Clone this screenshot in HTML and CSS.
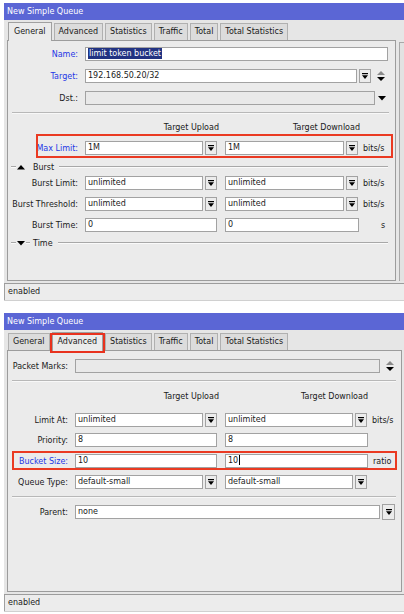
FILE: index.html
```html
<!DOCTYPE html>
<html>
<head>
<meta charset="utf-8">
<link rel="stylesheet" href="styles.css">
</head>
<body>
<div class="page">
  <!-- Window 1: General -->
  <div class="window">
    <div class="titlebar">New Simple Queue</div>
    <div class="tabs">
      <div class="tab active">General</div>
      <div class="tab">Advanced</div>
      <div class="tab">Statistics</div>
      <div class="tab">Traffic</div>
      <div class="tab">Total</div>
      <div class="tab">Total Statistics</div>
    </div>
    <div class="body">
      <div class="panel gen">
        <div class="row mt6">
          <span class="lbl blue">Name:</span>
          <div class="in w-name"><span class="sel">limit token bucket</span></div>
        </div>
        <div class="row mt8">
          <span class="lbl blue">Target:</span>
          <div class="in w-target">192.168.50.20/32</div>
          <span class="dd"><svg width="6" height="6" viewBox="0 0 6 6"><rect x="0" y="0" width="6" height="1.2" fill="#000"/><polygon points="0,2.2 6,2.2 3,6" fill="#000"/></svg></span>
          <span class="updown"><svg width="8" height="10" viewBox="0 0 8 10"><polygon points="0,4 8,4 4,0" fill="#8a8a8a"/><polygon points="0,6 8,6 4,10" fill="#000"/></svg></span>
        </div>
        <div class="row mt8">
          <span class="lbl">Dst.:</span>
          <div class="in dis w-dst"></div>
          <span class="arrow"><svg width="8" height="5" viewBox="0 0 8 5"><polygon points="0,0 8,0 4,4.5" fill="#000"/></svg></span>
        </div>
        <div class="sep mt7"></div>
        <div class="hdr mt8">
          <span class="hc1">Target Upload</span>
          <span class="hc2">Target Download</span>
        </div>
        <div class="row mt7 hl hl-max">
          <span class="lbl blue">Max Limit:</span>
          <div class="pair"><div class="in in1">1M</div><span class="dd"><svg width="6" height="6" viewBox="0 0 6 6"><rect x="0" y="0" width="6" height="1.2" fill="#000"/><polygon points="0,2.2 6,2.2 3,6" fill="#000"/></svg></span></div>
          <div class="pair"><div class="in in2">1M</div><span class="dd"><svg width="6" height="6" viewBox="0 0 6 6"><rect x="0" y="0" width="6" height="1.2" fill="#000"/><polygon points="0,2.2 6,2.2 3,6" fill="#000"/></svg></span></div>
          <span class="unit">bits/s</span>
        </div>
        <div class="sect mt7">
          <span class="ln-s"></span>
          <svg class="tri" width="8" height="5" viewBox="0 0 8 5"><polygon points="0,4.5 8,4.5 4,0" fill="#000"/></svg>
          <span class="stext">Burst</span>
          <span class="ln"></span>
        </div>
        <div class="row mt4">
          <span class="lbl">Burst Limit:</span>
          <div class="pair"><div class="in in1">unlimited</div><span class="dd"><svg width="6" height="6" viewBox="0 0 6 6"><rect x="0" y="0" width="6" height="1.2" fill="#000"/><polygon points="0,2.2 6,2.2 3,6" fill="#000"/></svg></span></div>
          <div class="pair"><div class="in in2">unlimited</div><span class="dd"><svg width="6" height="6" viewBox="0 0 6 6"><rect x="0" y="0" width="6" height="1.2" fill="#000"/><polygon points="0,2.2 6,2.2 3,6" fill="#000"/></svg></span></div>
          <span class="unit">bits/s</span>
        </div>
        <div class="row mt7">
          <span class="lbl">Burst Threshold:</span>
          <div class="pair"><div class="in in1">unlimited</div><span class="dd"><svg width="6" height="6" viewBox="0 0 6 6"><rect x="0" y="0" width="6" height="1.2" fill="#000"/><polygon points="0,2.2 6,2.2 3,6" fill="#000"/></svg></span></div>
          <div class="pair"><div class="in in2">unlimited</div><span class="dd"><svg width="6" height="6" viewBox="0 0 6 6"><rect x="0" y="0" width="6" height="1.2" fill="#000"/><polygon points="0,2.2 6,2.2 3,6" fill="#000"/></svg></span></div>
          <span class="unit">bits/s</span>
        </div>
        <div class="row mt7">
          <span class="lbl">Burst Time:</span>
          <div class="in full1">0</div>
          <div class="in full2 w-bt2">0</div>
          <span class="unit unit-s">s</span>
        </div>
        <div class="sect mt6">
          <span class="ln-s"></span>
          <svg class="tri" width="8" height="5" viewBox="0 0 8 5"><polygon points="0,0 8,0 4,4.5" fill="#000"/></svg>
          <span class="ln-s2"></span>
          <span class="stext">Time</span>
          <span class="ln"></span>
        </div>
      </div>
      <div class="side"></div>
    </div>
    <div class="status"><div class="cell">enabled</div></div>
  </div>

  <!-- Window 2: Advanced -->
  <div class="window">
    <div class="titlebar">New Simple Queue</div>
    <div class="tabs">
      <div class="tab">General</div>
      <div class="tab active boxed">Advanced</div>
      <div class="tab">Statistics</div>
      <div class="tab">Traffic</div>
      <div class="tab">Total</div>
      <div class="tab">Total Statistics</div>
    </div>
    <div class="body">
      <div class="panel adv">
        <div class="row mt8">
          <span class="lbl">Packet Marks:</span>
          <div class="in dis w-pm"></div>
          <span class="updown ud2"><svg width="8" height="10" viewBox="0 0 8 10"><polygon points="0,4 8,4 4,0" fill="#8a8a8a"/><polygon points="0,6 8,6 4,10" fill="#000"/></svg></span>
        </div>
        <div class="sep sep2 mt7"></div>
        <div class="hdr mt9">
          <span class="hc1">Target Upload</span>
          <span class="hc2">Target Download</span>
        </div>
        <div class="row mt10">
          <span class="lbl">Limit At:</span>
          <div class="pair"><div class="in in1">unlimited</div><span class="dd"><svg width="6" height="6" viewBox="0 0 6 6"><rect x="0" y="0" width="6" height="1.2" fill="#000"/><polygon points="0,2.2 6,2.2 3,6" fill="#000"/></svg></span></div>
          <div class="pair"><div class="in in2">unlimited</div><span class="dd"><svg width="6" height="6" viewBox="0 0 6 6"><rect x="0" y="0" width="6" height="1.2" fill="#000"/><polygon points="0,2.2 6,2.2 3,6" fill="#000"/></svg></span></div>
          <span class="unit">bits/s</span>
        </div>
        <div class="row mt6">
          <span class="lbl">Priority:</span>
          <div class="in full1">8</div>
          <div class="in full2">8</div>
        </div>
        <div class="row mt7 hl hl-bucket">
          <span class="lbl blue">Bucket Size:</span>
          <div class="in full1">10</div>
          <div class="in full2">10<span class="caret"></span></div>
          <span class="unit">ratio</span>
        </div>
        <div class="row mt7">
          <span class="lbl">Queue Type:</span>
          <div class="pair"><div class="in in1">default-small</div><span class="dd"><svg width="6" height="6" viewBox="0 0 6 6"><rect x="0" y="0" width="6" height="1.2" fill="#000"/><polygon points="0,2.2 6,2.2 3,6" fill="#000"/></svg></span></div>
          <div class="pair"><div class="in in2">default-small</div><span class="dd"><svg width="6" height="6" viewBox="0 0 6 6"><rect x="0" y="0" width="6" height="1.2" fill="#000"/><polygon points="0,2.2 6,2.2 3,6" fill="#000"/></svg></span></div>
        </div>
        <div class="sep sep2 mt7"></div>
        <div class="row mt7">
          <span class="lbl">Parent:</span>
          <div class="in w-pm">none</div>
          <span class="dd dd-big"><svg width="6" height="6" viewBox="0 0 6 6"><rect x="0" y="0" width="6" height="1.2" fill="#000"/><polygon points="0,2.2 6,2.2 3,6" fill="#000"/></svg></span>
        </div>
      </div>
    </div>
    <div class="status"><div class="cell">enabled</div></div>
  </div>
</div>
</body>
</html>
```

FILE: styles.css
```css
* { box-sizing: border-box; }

html, body {
  margin: 0;
  padding: 0;
  background: #ffffff;
}

body {
  font-family: "DejaVu Sans", Verdana, sans-serif;
  font-size: 8px;
  color: #1a1a1a;
  width: 404px;
  height: 614px;
  overflow: hidden;
}

.page {
  padding-top: 3px;
  display: flex;
  flex-direction: column;
  gap: 12px;
}

.window {
  margin-left: 4px;
  width: 400px;
  background: #e6e6e6;
  display: flex;
  flex-direction: column;
}

.titlebar {
  height: 17px;
  line-height: 17px;
  background: #5b66d5;
  color: #fff;
  padding-left: 3px;
  white-space: nowrap;
}

.tabs {
  height: 20px;
  display: flex;
  align-items: flex-end;
  gap: 2px;
  padding-left: 4px;
}

.tab {
  height: 17px;
  line-height: 16px;
  padding: 0 4px;
  background: #dcdcdc;
  border: 1px solid #b0b0b0;
  border-bottom: none;
  white-space: nowrap;
  color: #1a1a1a;
}

.tab.active {
  height: 19px;
  line-height: 17px;
  padding: 0 5px;
  background: #ebebeb;
  margin-bottom: -1px;
  position: relative;
  z-index: 2;
  border-color: #a0a0a0;
}

.tab.boxed::after {
  content: "";
  position: absolute;
  left: -3px;
  right: -3px;
  top: 0px;
  bottom: -2px;
  border: 2px solid #e8321e;
}

.body {
  display: flex;
  gap: 3px;
}

.panel {
  margin-left: 3px;
  width: 389px;
  height: 241px;
  border: 1px solid #9c9c9c;
  background: #ebebeb;
  display: flex;
  flex-direction: column;
}

.panel.adv {
  width: 395px;
  height: 242px;
}

.side {
  flex: 1;
  margin-top: 2px;
  border-left: 1px solid #a8a8a8;
  border-top: 1px solid #a8a8a8;
  background: #e2e2e2;
}

.gen {
  --lbl: 70px;
  --in1: 118px;
  --in2: 119px;
}

.adv {
  --lbl: 60px;
  --in1: 128px;
  --in2: 128px;
}

.row {
  display: flex;
  align-items: center;
  height: 14px;
  flex: none;
  position: relative;
}

.lbl {
  width: var(--lbl);
  margin-right: 7px;
  text-align: right;
  white-space: nowrap;
  flex: none;
}

.lbl.blue { color: #1e37e6; }

.in {
  height: 14px;
  line-height: 12px;
  border: 1px solid #a2a2a2;
  background: #fff;
  padding-left: 2px;
  white-space: nowrap;
  overflow: hidden;
  flex: none;
}

.in.dis { background: #e9e9e9; }

.sel {
  background: #223382;
  color: #fff;
  padding: 0 1px;
  display: inline-block;
  line-height: 11px;
}

.caret {
  display: inline-block;
  width: 1px;
  height: 10px;
  background: #000;
  vertical-align: -2px;
  margin-left: 1px;
}

.w-name { width: 303px; }
.w-target { width: 272px; }
.w-dst { width: 290px; }
.w-pm { width: 305px; }

.pair {
  display: flex;
  gap: 2px;
  flex: none;
}
.pair + .pair { margin-left: 8px; }

.in1 { width: var(--in1); }
.in2 { width: var(--in2); }

.full1 { width: calc(var(--in1) + 14px); }
.full2 { width: calc(var(--in2) + 15px); margin-left: 8px; }
.w-bt2 { width: 134px; }

.dd {
  width: 12px;
  height: 14px;
  border: 1px solid #a2a2a2;
  background: #ececec;
  display: flex;
  align-items: center;
  justify-content: center;
  flex: none;
  margin-left: 2px;
}
.pair .dd { margin-left: 0; }

.dd-big {
  width: 13px;
  height: 16px;
}

.updown {
  display: flex;
  margin-left: 6px;
  flex: none;
}
.ud2 { margin-left: 6px; }

.arrow {
  display: flex;
  margin-left: 3px;
  flex: none;
}

.unit {
  margin-left: 5px;
  white-space: nowrap;
}
.unit-s { margin-left: 22px; }

.sep {
  height: 2px;
  border-top: 1px solid #b8b8b8;
  border-bottom: 1px solid #f8f8f8;
  margin-left: 4px;
  margin-right: 6px;
  flex: none;
}
.sep2 { margin-right: 5px; }

.hdr {
  display: flex;
  height: 12px;
  line-height: 12px;
  flex: none;
  padding-left: calc(var(--lbl) + 7px);
  white-space: nowrap;
}
.hc1 { width: calc(var(--in1) + 16px); text-align: right; }
.hc2 { width: calc(var(--in2) + 16px); margin-left: 6px; text-align: right; }
.adv .hc2 { width: calc(var(--in2) + 15px); }

.sect {
  display: flex;
  align-items: center;
  height: 10px;
  flex: none;
  padding-left: 3px;
  padding-right: 7px;
}
.ln-s {
  width: 5px;
  height: 2px;
  border-top: 1px solid #a8a8a8;
  border-bottom: 1px solid #fafafa;
}
.ln-s2 {
  width: 4px;
  height: 2px;
  border-top: 1px solid #a8a8a8;
  border-bottom: 1px solid #fafafa;
}
.tri { margin: 0 1px; flex: none; }
.stext { margin: 0 5px 0 7px; }
.ln-s2 + .stext { margin-left: 3px; }
.ln {
  flex: 1;
  height: 2px;
  border-top: 1px solid #a8a8a8;
  border-bottom: 1px solid #fafafa;
}

.hl::after {
  content: "";
  position: absolute;
  border: 2px solid #ea3a22;
  pointer-events: none;
}
.hl-max::after {
  top: -7px;
  bottom: -3px;
  left: 28px;
  right: 2px;
}
.hl-bucket::after {
  top: -3px;
  bottom: -2px;
  left: 4px;
  right: 4px;
}

.mt4 { margin-top: 4px; }
.mt6 { margin-top: 6px; }
.mt7 { margin-top: 7px; }
.mt8 { margin-top: 8px; }
.mt9 { margin-top: 9px; }
.mt10 { margin-top: 10px; }

.status {
  margin-top: 2px;
  height: 18px;
  border-top: 1px solid #9c9c9c;
  border-bottom: 1px solid #d0d0d0;
  background: #ececec;
  display: flex;
}
.status .cell {
  padding-left: 3px;
  line-height: 16px;
  border-left: 1px solid #a0a0a0;
  width: 100%;
}
```
